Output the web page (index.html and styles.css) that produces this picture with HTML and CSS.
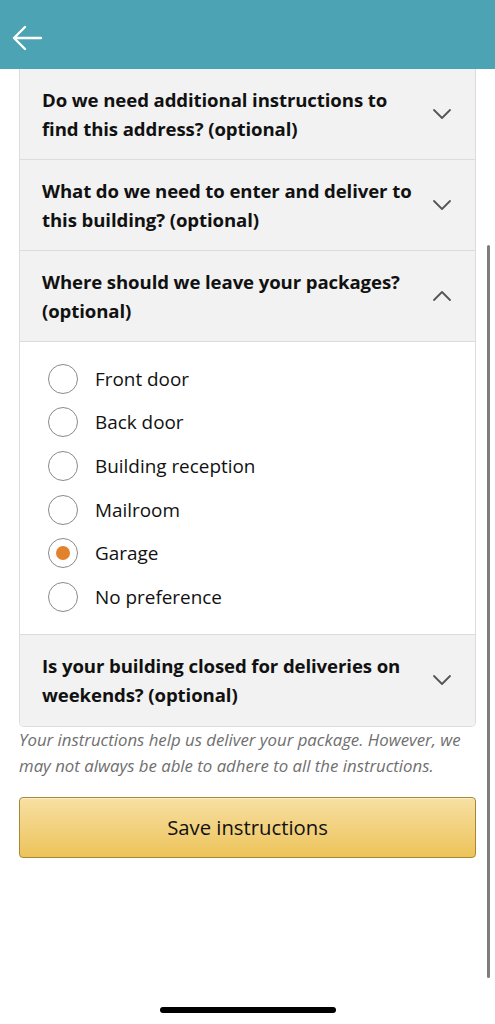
FILE: index.html
```html
<!DOCTYPE html>
<html>
<head>
<meta charset="utf-8">
<link rel="stylesheet" href="styles.css">
</head>
<body>
<header class="topbar">
  <svg class="back" width="32" height="26" viewBox="0 0 32 26"><path d="M30 13H3M14 2L3 13l11 11" fill="none" stroke="#fff" stroke-width="2.4" stroke-linecap="round" stroke-linejoin="round"/></svg>
</header>
<main class="content">
  <section class="card">
    <div class="acc-head">
      <span class="acc-title">Do we need additional instructions to find this address? (optional)</span>
      <svg class="chev" width="20" height="12" viewBox="0 0 20 12"><path d="M2 2l8 8 8-8" fill="none" stroke="#555" stroke-width="1.8" stroke-linecap="round" stroke-linejoin="round"/></svg>
    </div>
    <div class="acc-head">
      <span class="acc-title">What do we need to enter and deliver to this building? (optional)</span>
      <svg class="chev" width="20" height="12" viewBox="0 0 20 12"><path d="M2 2l8 8 8-8" fill="none" stroke="#555" stroke-width="1.8" stroke-linecap="round" stroke-linejoin="round"/></svg>
    </div>
    <div class="acc-head">
      <span class="acc-title">Where should we leave your packages? (optional)</span>
      <svg class="chev" width="20" height="12" viewBox="0 0 20 12"><path d="M2 10l8-8 8 8" fill="none" stroke="#555" stroke-width="1.8" stroke-linecap="round" stroke-linejoin="round"/></svg>
    </div>
    <div class="acc-body">
      <div class="radio-row"><span class="radio"></span><span class="label">Front door</span></div>
      <div class="radio-row"><span class="radio"></span><span class="label">Back door</span></div>
      <div class="radio-row"><span class="radio"></span><span class="label">Building reception</span></div>
      <div class="radio-row"><span class="radio"></span><span class="label">Mailroom</span></div>
      <div class="radio-row"><span class="radio checked"></span><span class="label">Garage</span></div>
      <div class="radio-row"><span class="radio"></span><span class="label">No preference</span></div>
    </div>
    <div class="acc-head last">
      <span class="acc-title">Is your building closed for deliveries on weekends? (optional)</span>
      <svg class="chev" width="20" height="12" viewBox="0 0 20 12"><path d="M2 2l8 8 8-8" fill="none" stroke="#555" stroke-width="1.8" stroke-linecap="round" stroke-linejoin="round"/></svg>
    </div>
  </section>
  <p class="note">Your instructions help us deliver your package. However, we may not always be able to adhere to all the instructions.</p>
  <button class="save">Save instructions</button>
</main>
<div class="scrollbar"></div>
<div class="home-indicator"></div>
</body>
</html>
```
FILE: styles.css
```css
* { box-sizing: border-box; }
html, body {
  margin: 0;
  padding: 0;
  background: #fff;
  width: 495px;
  height: 1024px;
  overflow: hidden;
  font-family: "Open Sans", "Noto Sans", sans-serif;
  color: #111;
  position: relative;
}
.topbar {
  height: 69px;
  background: #4ba3b4;
  display: flex;
  align-items: flex-end;
  padding: 0 0 18px 11px;
}
.back { display: block; }
.content {
  padding: 0 19px;
}
.card {
  border: 1px solid #dcdcdc;
  border-top: none;
  border-radius: 0 0 5px 5px;
  overflow: hidden;
}
.acc-head {
  background: #f2f2f2;
  display: flex;
  align-items: center;
  justify-content: space-between;
  padding: 16px 21px 16px 22px;
  height: 91px;
  border-bottom: 1px solid #dcdcdc;
}
.acc-head.last { border-bottom: none; height: 91px; }
.acc-title {
  font-weight: 700;
  font-size: 18.6px;
  line-height: 29px;
  letter-spacing: -0.1px;
  max-width: 380px;
  color: #111;
}
.chev { flex: none; margin-right: 2px; margin-top: -1px; }
.acc-body {
  background: #fff;
  padding: 15px 0 15px 28px;
  border-bottom: 1px solid #dcdcdc;
}
.radio-row {
  height: 43.6px;
  display: flex;
  align-items: center;
}
.radio {
  width: 30px;
  height: 30px;
  border: 1.5px solid #8a8a8a;
  border-radius: 50%;
  flex: none;
  display: flex;
  align-items: center;
  justify-content: center;
}
.radio.checked::after {
  content: "";
  width: 14px;
  height: 14px;
  border-radius: 50%;
  background: #e3822c;
}
.label {
  margin-left: 17px;
  font-size: 18.9px;
  color: #111;
}
.note {
  margin: 0;
  font-style: italic;
  font-size: 16.8px;
  line-height: 26px;
  color: #6f6f6f;
}
.save {
  margin-top: 18px;
  width: 100%;
  height: 61px;
  border: 1px solid #a88734;
  border-radius: 4px;
  background: linear-gradient(#f7e0a3, #edc35a);
  font-family: "Open Sans", "Noto Sans", sans-serif;
  font-size: 20.3px;
  color: #111;
  box-shadow: inset 0 1px 0 rgba(255,255,255,0.5);
}
.scrollbar {
  position: absolute;
  left: 487px;
  top: 245px;
  width: 3px;
  height: 733px;
  border-radius: 2px;
  background: #7d7d7d;
}
.home-indicator {
  position: absolute;
  left: 160px;
  top: 1007px;
  width: 176px;
  height: 6px;
  border-radius: 3px;
  background: #000;
}
```
